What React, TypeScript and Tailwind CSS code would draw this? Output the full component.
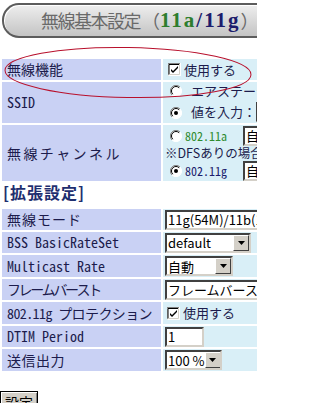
import React from "react";

const MONO = { fontFamily: '"Noto Sans Mono CJK JP", "Noto Sans CJK JP", "DejaVu Sans Mono", monospace' };
const SANS = { fontFamily: '"Noto Sans CJK JP", "Liberation Sans", sans-serif' };

function Check({ checked = true }: { checked?: boolean }) {
  return (
    <svg width="13" height="13" viewBox="0 0 13 13" className="shrink-0">
      <rect x="0" y="0" width="13" height="13" fill="#ffffff" />
      <path d="M0 12.5V0.5H12.5" stroke="#808080" fill="none" />
      <path d="M1 11.5V1.5H11.5" stroke="#000000" fill="none" />
      <path d="M0.5 12.5H12.5V0" stroke="#ffffff" fill="none" />
      <path d="M1.5 11.5H11.5V1" stroke="#d4d0c8" fill="none" />
      {checked && <path d="M3 6l2 2 5-5v2l-5 5-2-2z" fill="#000" />}
    </svg>
  );
}

function Radio({ checked = false }: { checked?: boolean }) {
  return (
    <svg width="12" height="12" viewBox="0 0 12 12" className="shrink-0">
      <circle cx="6" cy="6" r="5.5" fill="#fff" />
      <path d="M10 2A5.5 5.5 0 0 0 2 10" stroke="#808080" fill="none" />
      <path d="M9.2 2.8A4.5 4.5 0 0 0 2.8 9.2" stroke="#000" fill="none" />
      <path d="M2 10A5.5 5.5 0 0 0 10 2" stroke="#fff" fill="none" />
      {checked && <circle cx="6" cy="6" r="2" fill="#000" />}
    </svg>
  );
}

function Arrow() {
  return (
    <div className="w-[16px] h-[16px] bg-[#d4d0c8] border border-t-white border-l-white border-r-[#404040] border-b-[#404040] flex items-center justify-center shrink-0">
      <svg width="7" height="4" viewBox="0 0 7 4"><path d="M0 0h7L3.5 4z" fill="#000" /></svg>
    </div>
  );
}

function Select({ w, text }: { w: number; text: string }) {
  return (
    <div
      className="h-[20px] bg-white border-2 border-t-[#404040] border-l-[#404040] border-r-[#d4d0c8] border-b-[#d4d0c8] flex items-center justify-between pl-[1px] pr-0 shrink-0 whitespace-nowrap overflow-hidden"
      style={{ width: w }}
    >
      <span className="text-[13px] leading-none text-black whitespace-nowrap" style={SANS}>{text}</span>
      <Arrow />
    </div>
  );
}

function Input({ w, text }: { w: number; text: string }) {
  return (
    <div
      className="h-[20px] bg-white border-2 border-t-[#404040] border-l-[#404040] border-r-[#d4d0c8] border-b-[#d4d0c8] flex items-center pl-[1px] shrink-0 overflow-hidden whitespace-nowrap"
      style={{ width: w }}
    >
      <span className="text-[13px] leading-none text-black" style={SANS}>{text}</span>
    </div>
  );
}

function Row({ label, h, children, ls }: { label: string; h: number; children?: React.ReactNode; ls?: number }) {
  return (
    <div className="flex gap-[2px]" style={{ height: h }}>
      <div
        className="w-[159px] shrink-0 bg-[#c9d1f4] flex items-center pl-[5px] text-[14px] text-[#1c1c4c] whitespace-nowrap"
        style={{ ...MONO, letterSpacing: ls ?? 0 }}
      >
        {label}
      </div>
      <div className="w-[140px] shrink-0 bg-[#d9eff7] flex items-center pl-[2px] overflow-hidden">{children}</div>
    </div>
  );
}

export default function App() {
  return (
    <div className="w-[333px] h-[403px] bg-white relative overflow-hidden">
      <div className="w-[257px] overflow-hidden">
        {/* Header */}
        <div className="mt-[3px] ml-[2px] w-[290px] h-[35px] rounded-l-[17px] border-2 border-r-0 border-[#5c5c5c] bg-gradient-to-b from-[#eeeeee] to-[#c4c4c4] shadow-[inset_1px_1px_0_#ffffff] flex items-center pl-[37px] whitespace-nowrap">
          <span className="text-[18px] text-[#6a6a6a] tracking-[-1.5px]" style={SANS}>無線基本設定</span>
          <span className="text-[18px] text-[#6a6a6a] ml-[2px]" style={SANS}>（</span>
          <span className="text-[21px] font-bold text-[#2e7d2e] tracking-[2px]" style={{ fontFamily: '"Liberation Serif", serif' }}>11a</span>
          <span className="text-[21px] font-bold text-[#1c1c6c] tracking-[2px]" style={{ fontFamily: '"Liberation Serif", serif' }}>/11g</span>
          <span className="text-[18px] text-[#6a6a6a]" style={SANS}>）</span>
        </div>

        {/* Table 1 */}
        <div className="mt-[21px] ml-[2px] flex flex-col gap-[2px]">
          <Row label="無線機能" h={21}>
            <div className="flex items-center gap-[3px] pl-[3px]">
              <Check />
              <span className="text-[13px] text-[#1c1c4c]" style={SANS}>使用する</span>
            </div>
          </Row>
          <Row label="SSID" h={41}>
            <div className="flex flex-col w-full h-full">
              <div className="h-[17px] flex items-center gap-[9px] pl-[5px] whitespace-nowrap">
                <Radio />
                <span className="text-[13px] text-[#1c1c4c]" style={SANS}>エアステーションのMAC</span>
              </div>
              <div className="flex-1 flex items-end pb-[1px] gap-[9px] pl-[5px] whitespace-nowrap">
                <div className="mb-[3px]"><Radio checked /></div>
                <span className="text-[13px] text-[#1c1c4c] mb-[1px]" style={SANS}>値を入力：</span>
                <div className="-ml-[9px]"><Input w={60} text="DEFAULT" /></div>
              </div>
            </div>
          </Row>
          <Row label="無線チャンネル" h={56} ls={2.4}>
            <div className="flex flex-col w-full h-full">
              <div className="h-[21px] flex items-center pl-[5px] whitespace-nowrap">
                <Radio />
                <span className="ml-[3px] w-[62px] text-[12px] text-[#2e8b2e]" style={MONO}>802.11a</span>
                <Input w={60} text="自動" />
              </div>
              <div className="h-[14px] flex items-center whitespace-nowrap">
                <span className="text-[12.5px] text-[#1c1c4c] leading-none" style={SANS}>※DFSありの場合、</span>
              </div>
              <div className="flex-1 flex items-center pl-[5px] whitespace-nowrap">
                <Radio checked />
                <span className="ml-[3px] w-[62px] text-[12px] text-[#1c1c6c]" style={MONO}>802.11g</span>
                <Input w={60} text="自動" />
              </div>
            </div>
          </Row>
        </div>

        {/* Heading */}
        <div className="mt-[2px] ml-[3px] h-[18px] flex items-center text-[16px] font-bold text-[#1f2f6f] whitespace-nowrap tracking-[1px]" style={SANS}>
          [拡張設定]
        </div>

        {/* Table 2 */}
        <div className="mt-[8px] ml-[2px] flex flex-col gap-[2px]">
          <Row label="無線モード" h={21} ls={1}>
            <Input w={120} text="11g(54M)/11b(11M)" />
          </Row>
          <Row label="BSS BasicRateSet" h={21}>
            <Select w={86} text="default" />
          </Row>
          <Row label="Multicast Rate" h={22}>
            <Select w={68} text="自動" />
          </Row>
          <Row label="フレームバースト" h={21} ls={-2.4}>
            <Input w={120} text="フレームバースト" />
          </Row>
          <Row label="802.11g プロテクション" h={22} ls={-0.6}>
            <div className="flex items-center gap-[3px] pl-[2px]">
              <Check />
              <span className="text-[13px] text-[#1c1c4c]" style={SANS}>使用する</span>
            </div>
          </Row>
          <Row label="DTIM Period" h={21}>
            <Input w={39} text="1" />
          </Row>
          <Row label="送信出力" h={22} ls={0.5}>
            <Select w={57} text="100 %" />
          </Row>
        </div>

        {/* Button */}
        <div className="mt-[20px] ml-0">
          <div className="w-[38px] h-[22px] bg-[#d4d0c8] border border-black shadow-[inset_1px_1px_0_#ffffff,inset_-1px_-1px_0_#808080] flex items-center justify-center text-[14px] text-black" style={SANS}>
            設定
          </div>
        </div>
      </div>

      {/* red annotation ellipse */}
      <svg className="absolute left-0 top-0 pointer-events-none" width="333" height="403">
        <ellipse cx="128" cy="72.5" rx="123" ry="25" fill="none" stroke="#b8102c" strokeWidth="1" transform="rotate(1 128 72.5)" />
      </svg>
    </div>
  );
}
